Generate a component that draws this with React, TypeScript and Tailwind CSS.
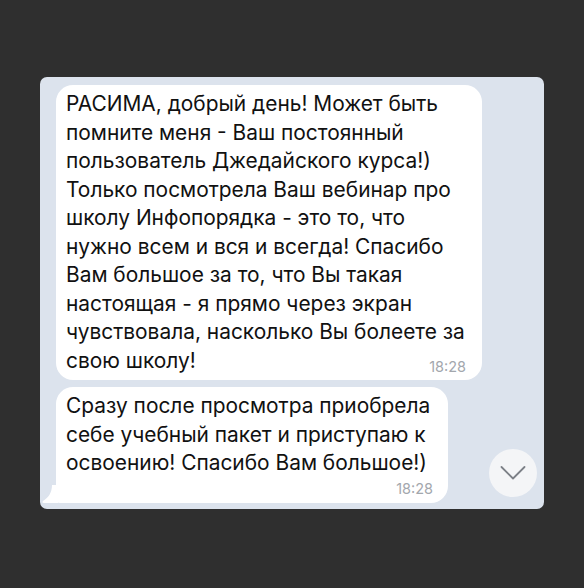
const first = [
  'РАСИМА, добрый день! Может быть',
  'помните меня - Ваш постоянный',
  'пользователь Джедайского курса!)',
  'Только посмотрела Ваш вебинар про',
  'школу Инфопорядка - это то, что',
  'нужно всем и вся и всегда! Спасибо',
  'Вам большое за то, что Вы такая',
  'настоящая - я прямо через экран',
  'чувствовала, насколько Вы болеете за',
  'свою школу!',
]

const second = [
  'Сразу после просмотра приобрела',
  'себе учебный пакет и приступаю к',
  'освоению! Спасибо Вам большое!)',
]

function Lines({ lines }: { lines: string[] }) {
  return (
    <div className="text-[20.9px] leading-[28.5px] text-[#111]">
      {lines.map((l) => (
        <div key={l} className="whitespace-nowrap">
          {l}
        </div>
      ))}
    </div>
  )
}

export default function App() {
  return (
    <div
      className="w-[584px] h-[588px] bg-[#2f2f2f] pt-[77px] pl-[40px]"
      style={{ fontFamily: 'Inter, "Noto Sans", sans-serif' }}
    >
      <div className="relative w-[504px] h-[432px] rounded-[7px] bg-[#dce3ed] pt-[8px] pl-[16px] flex flex-col gap-[7px]">
        {/* first message */}
        <div className="w-[426px] rounded-[17px] bg-white pt-[5px] pl-[10px] pb-[4px] pr-[16px]">
          <Lines lines={first} />
          <div className="-mt-[17px] h-[18px] text-right text-[14.5px] leading-[18px] text-[#a3a7ad]">
            18:28
          </div>
        </div>

        {/* second message */}
        <div className="relative w-[392px] rounded-[17px] rounded-bl-[4px] bg-white pt-[5px] pl-[10px] pb-[5px] pr-[15px]">
          <Lines lines={second} />
          <div className="mt-[2px] h-[18px] text-right text-[14.5px] leading-[18px] text-[#a3a7ad]">
            18:28
          </div>
          <svg
            className="absolute -left-[14px] bottom-0"
            width="16"
            height="18"
            viewBox="0 0 16 18"
          >
            <path d="M16 0 V18 H2 C0.5 18 0 17 1 16 C6 13 10 8 10 0 Z" fill="#fff" />
          </svg>
        </div>

        {/* scroll down */}
        <div className="absolute right-[7px] bottom-[12px] w-[48px] h-[48px] rounded-full bg-[#f4f5f7] flex items-center justify-center">
          <svg width="26" height="16" viewBox="0 0 26 16" fill="none">
            <path
              d="M1.5 2 L13 13.5 L24.5 2"
              stroke="#7c8087"
              strokeWidth="1.8"
              strokeLinecap="round"
              strokeLinejoin="round"
            />
          </svg>
        </div>
      </div>
    </div>
  )
}
